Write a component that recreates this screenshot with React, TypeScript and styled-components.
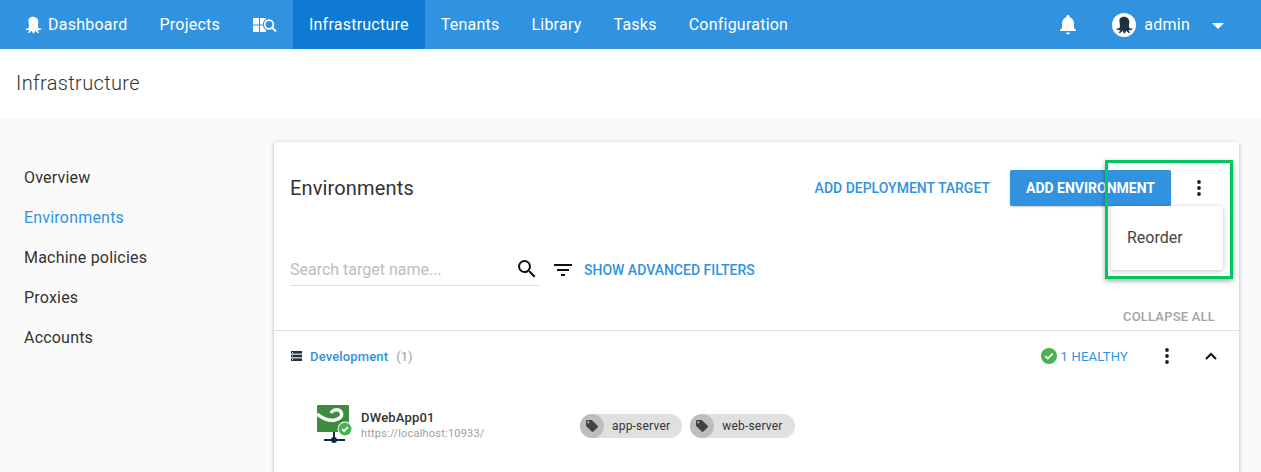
import styled, { createGlobalStyle } from 'styled-components';

const GlobalStyle = createGlobalStyle`
  html, body {
    margin: 0;
    padding: 0;
    background: #fafafa;
    font-family: Roboto, "Liberation Sans", sans-serif;
    overflow: hidden;
  }
`;

const Page = styled.div`
  width: 1261px;
  height: 472px;
  overflow: hidden;
  position: relative;
`;

const NavBar = styled.nav`
  display: flex;
  align-items: stretch;
  height: 49px;
  padding-left: 8px;
  background: #3192e0;
  color: #fff;
`;

const NavItem = styled.div<{ $active?: boolean }>`
  display: flex;
  align-items: center;
  gap: 6px;
  padding: 0 16px;
  font-size: 16px;
  letter-spacing: 0.23px;
  line-height: 48px;
  background: ${(p) => (p.$active ? '#0e7ad4' : 'transparent')};
`;

const NavRight = styled.div`
  display: flex;
  align-items: center;
  margin-left: auto;
`;

const Bell = styled.div`
  display: flex;
  margin-right: 35px;
`;

const Avatar = styled.div`
  display: flex;
  align-items: center;
  justify-content: center;
  width: 24px;
  height: 24px;
  border-radius: 50%;
  background: #fff;
  margin-right: 8px;
`;

const UserName = styled.span`
  font-size: 16px;
  letter-spacing: 0.23px;
  margin-right: 22px;
`;

const Caret = styled.div`
  width: 0;
  height: 0;
  border-left: 6px solid transparent;
  border-right: 6px solid transparent;
  border-top: 6px solid #fff;
  margin: 3px 37px 0 0;
`;

const TitleBar = styled.header`
  display: flex;
  align-items: center;
  height: 69px;
  padding: 0 0 2px 16px;
  box-sizing: border-box;
  background: #fff;
  color: #333;
  font-size: 20px;
  font-weight: 300;
  letter-spacing: 0.35px;
`;

const Body = styled.div`
  display: flex;
  padding: 24px 22px 0 0;
  align-items: flex-start;
`;

const Sidebar = styled.aside`
  display: flex;
  flex-direction: column;
  width: 274px;
  flex-shrink: 0;
  padding: 16px 0 0 24px;
  box-sizing: border-box;
`;

const SideLink = styled.div<{ $active?: boolean }>`
  height: 40px;
  line-height: 40px;
  font-size: 16px;
  letter-spacing: 0.2px;
  color: ${(p) => (p.$active ? '#3192e0' : '#333')};
`;

const Card = styled.main`
  flex: 1;
  height: 360px;
  background: #fff;
  box-shadow: 0 1px 4px rgba(0, 0, 0, 0.28);
`;

const CardHeader = styled.div`
  display: flex;
  align-items: center;
  height: 92px;
  padding: 0 16px;
`;

const CardTitle = styled.h2`
  margin: 0 auto 0 0;
  font-size: 20px;
  font-weight: 400;
  letter-spacing: 0.15px;
  color: #333;
`;

const TextButton = styled.span`
  font-size: 14px;
  font-weight: 500;
  color: #3192e0;
  text-transform: uppercase;
`;

const MutedButton = styled.span`
  padding-top: 2px;
  font-size: 13px;
  font-weight: 500;
  letter-spacing: 0.2px;
  color: #a3a3a3;
  text-transform: uppercase;
`;

const PrimaryButton = styled.div`
  display: flex;
  align-items: center;
  justify-content: center;
  width: 161px;
  height: 36px;
  margin-left: 20px;
  border-radius: 2px;
  background: #3192e0;
  color: #fff;
  font-size: 14px;
  font-weight: 700;
  text-transform: uppercase;
  box-shadow: 0 1px 2px rgba(0, 0, 0, 0.2);
`;

const DotsButton = styled.div<{ $left: number; $right: number }>`
  display: flex;
  justify-content: center;
  width: 24px;
  margin: 0 ${(p) => p.$right}px 0 ${(p) => p.$left}px;
`;

const FilterRow = styled.div`
  display: flex;
  align-items: center;
  height: 60px;
  padding: 0 16px;
  margin-top: 6px;
`;

const SearchBox = styled.div`
  display: flex;
  align-items: center;
  justify-content: space-between;
  width: 249px;
  height: 36px;
  box-sizing: border-box;
  padding-top: 4px;
  margin-bottom: 4px;
  border-bottom: 1px solid #e0e0e0;
`;

const Placeholder = styled.span`
  font-size: 16px;
  color: #bdbdbd;
`;

const SearchGlyph = styled.svg`
  margin-top: -2px;
`;

const FilterToggle = styled.div`
  display: flex;
  align-items: center;
  gap: 12px;
  margin-left: 15px;
`;

const CollapseRow = styled.div`
  display: flex;
  justify-content: flex-end;
  align-items: center;
  height: 29px;
  padding-right: 24px;
  margin-top: 1px;
  border-bottom: 1px solid #e0e0e0;
`;

const GroupRow = styled.div`
  display: flex;
  align-items: center;
  height: 50px;
  padding: 0 16px;
`;

const GroupName = styled.span`
  margin-left: 8px;
  font-size: 13px;
  font-weight: 500;
  letter-spacing: 0.15px;
  color: #3192e0;
`;

const GroupCount = styled.span`
  margin: 0 auto 0 8px;
  font-size: 13px;
  color: #9e9e9e;
`;

const HealthLabel = styled.span`
  margin-left: 4px;
  font-size: 13px;
  letter-spacing: 0.2px;
  color: #3192e0;
`;

const Chevron = styled.svg`
  margin-left: 20px;
`;

const TargetRow = styled.div`
  display: flex;
  align-items: center;
  height: 52px;
  padding-left: 43px;
  margin-top: 19px;
`;

const MachineGlyph = styled.svg`
  margin-bottom: 4px;
`;

const TargetText = styled.div`
  display: flex;
  flex-direction: column;
  gap: 1px;
  width: 219px;
  margin: 0 0 3px 8px;
`;

const TargetName = styled.span`
  font-size: 13px;
  font-weight: 500;
  letter-spacing: 0.2px;
  line-height: 16px;
  color: #333;
`;

const TargetUrl = styled.span`
  font-size: 11px;
  letter-spacing: 0.2px;
  line-height: 13px;
  color: #9e9e9e;
`;

const Tag = styled.div`
  display: flex;
  align-items: center;
  height: 24px;
  margin-right: 8px;
  padding-right: 12px;
  border-radius: 12px;
  background: #e0e0e0;
  color: #333;
  font-size: 12px;
  letter-spacing: 0.2px;
`;

const TagIcon = styled.div`
  display: flex;
  align-items: center;
  justify-content: center;
  width: 24px;
  height: 24px;
  margin-right: 8px;
  border-radius: 50%;
  background: #bdbdbd;
`;

const Menu = styled.div`
  position: absolute;
  left: 1111px;
  top: 206px;
  display: flex;
  align-items: center;
  width: 112px;
  height: 64px;
  padding: 0 0 2px 16px;
  box-sizing: border-box;
  border-radius: 2px;
  background: #fff;
  color: #444;
  font-size: 16px;
  box-shadow: 0 1px 5px rgba(0, 0, 0, 0.25);
`;

const Highlight = styled.div`
  position: absolute;
  left: 1105px;
  top: 160px;
  width: 128px;
  height: 119px;
  box-sizing: border-box;
  border: 3px solid #00c75f;
  box-shadow: 0 2px 5px rgba(0, 0, 0, 0.35);
`;

const Octopus = ({ color, size }: { color: string; size: number }) => (
  <svg width={size} height={size} viewBox="0 0 18 18" fill={color}>
    <path d="M9 .8c3.200 0 5.300 2.400 5.300 5.300 0 2.200-.6 3.300-.2 4.800.3 1.200 1.400 1.800 3 1.500.5 0 .6.5.2.8-1.200 1-2.700 1.200-3.800.6.2 1.100 1 1.900 1.400 2.500.3.4 0 .7-.4.6-1.500-.3-2.800-1.300-3.400-2.500-.2 1.200-.5 2.100-1.200 2.900-.3.3-.6.3-.9 0-.7-.8-1-1.700-1.200-2.900-.6 1.200-1.900 2.200-3.400 2.500-.4.1-.7-.2-.4-.6.4-.6 1.200-1.400 1.400-2.500-1.100.6-2.600.4-3.800-.6-.4-.3-.3-.8.2-.8 1.600.3 2.700-.3 3-1.500.4-1.500-.2-2.600-.2-4.800C3.700 3.200 5.800.8 9 .8z" />
  </svg>
);

const Dots = () => (
  <svg width="4" height="16" viewBox="0 0 4 16" fill="#212121">
    <circle cx="2" cy="2" r="1.900" />
    <circle cx="2" cy="8" r="1.900" />
    <circle cx="2" cy="14" r="1.900" />
  </svg>
);

const TagGlyph = () => (
  <svg width="14" height="14" viewBox="0 0 14 14" fill="#424242">
    <path d="M1 2.200C1 1.500 1.500 1 2.200 1h4.200c.4 0 .7.1.9.4l5.300 5.300c.5.5.5 1.200 0 1.700l-4.200 4.200c-.5.5-1.200.5-1.700 0L1.400 7.300C1.100 7.100 1 6.800 1 6.400V2.200zM3.200 4.400a1.100 1.100 0 1 0 0-2.200 1.100 1.100 0 0 0 0 2.200z" fillRule="evenodd" />
  </svg>
);

const CheckBadge = ({ size }: { size: number }) => (
  <svg width={size} height={size} viewBox="0 0 16 16">
    <circle cx="8" cy="8" r="8" fill="#48b350" />
    <path d="M4.300 8.200l2.500 2.400 4.900-4.900" fill="none" stroke="#fff" strokeWidth="1.800" />
  </svg>
);

const MachineIcon = () => (
  <MachineGlyph width="36" height="38" viewBox="0 0 36 38">
    <rect x="0" y="0" width="32" height="27" rx="1" fill="#3b8c3c" />
    <path d="M0 9c5 4 12 7 18 6 5-1 8-4 6-8-2-3-8-3-10 1" fill="none" stroke="#fff" strokeWidth="3.500" />
    <rect x="16" y="27" width="2" height="8" fill="#14283c" />
    <rect x="7" y="34" width="21" height="2" fill="#14283c" />
    <circle cx="17" cy="35" r="3" fill="#14283c" />
    <circle cx="28" cy="24" r="7.500" fill="#fff" />
    <g transform="translate(21.500 17.500) scale(.81)">
      <circle cx="8" cy="8" r="8" fill="#48b350" />
      <path d="M4.300 8.200l2.500 2.400 4.900-4.900" fill="none" stroke="#fff" strokeWidth="2" />
    </g>
  </MachineGlyph>
);

export default function App() {
  return (
    <Page>
      <GlobalStyle />
      <NavBar>
        <NavItem>
          <Octopus color="#fff" size={18} />
          Dashboard
        </NavItem>
        <NavItem>Projects</NavItem>
        <NavItem>
          <svg width="25" height="16" viewBox="0 0 25 16" fill="#fff">
            <rect x="1" y="1" width="6" height="6.500" rx=".5" />
            <rect x="8" y="1" width="6" height="6.500" rx=".5" />
            <rect x="1" y="8.500" width="6" height="6.500" rx=".5" />
            <rect x="8" y="8.500" width="6" height="6.500" rx=".5" />
            <circle cx="17" cy="7.500" r="6.200" fill="#3192e0" />
            <circle cx="17" cy="7.500" r="4.300" fill="none" stroke="#fff" strokeWidth="1.800" />
            <path d="M20 10.500l4 4" stroke="#fff" strokeWidth="2" />
          </svg>
        </NavItem>
        <NavItem $active>Infrastructure</NavItem>
        <NavItem>Tenants</NavItem>
        <NavItem>Library</NavItem>
        <NavItem>Tasks</NavItem>
        <NavItem>Configuration</NavItem>
        <NavRight>
          <Bell>
            <svg width="18" height="20" viewBox="0 0 18 20" fill="#fff">
              <path d="M9 0c.9 0 1.500.6 1.500 1.500v.7C13.300 3 15 5.300 15 8.500v4.500l2 2v1H1v-1l2-2V8.500C3 5.300 4.700 3 7.500 2.200v-.7C7.500.6 8.100 0 9 0zM7 17.500h4c0 1.100-.9 2-2 2s-2-.9-2-2z" />
            </svg>
          </Bell>
          <Avatar>
            <Octopus color="#1f303f" size={18} />
          </Avatar>
          <UserName>admin</UserName>
          <Caret />
        </NavRight>
      </NavBar>
      <TitleBar>Infrastructure</TitleBar>
      <Body>
        <Sidebar>
          <SideLink>Overview</SideLink>
          <SideLink $active>Environments</SideLink>
          <SideLink>Machine policies</SideLink>
          <SideLink>Proxies</SideLink>
          <SideLink>Accounts</SideLink>
        </Sidebar>
        <Card>
          <CardHeader>
            <CardTitle>Environments</CardTitle>
            <TextButton>Add deployment target</TextButton>
            <PrimaryButton>Add environment</PrimaryButton>
            <DotsButton $left={16} $right={12}>
              <Dots />
            </DotsButton>
          </CardHeader>
          <FilterRow>
            <SearchBox>
              <Placeholder>Search target name...</Placeholder>
              <SearchGlyph width="24" height="24" viewBox="0 0 24 24" fill="#111">
                <path d="M15.500 14h-.79l-.28-.27A6.471 6.471 0 0 0 16 9.500 6.500 6.500 0 1 0 9.500 16c1.610 0 3.090-.59 4.230-1.570l.27.28v.79l5 4.990L20.490 19l-4.990-5zm-6 0C7.010 14 5 11.990 5 9.500S7.010 5 9.500 5 14 7.010 14 9.500 11.990 14 9.500 14z" />
              </SearchGlyph>
            </SearchBox>
            <FilterToggle>
              <svg width="18" height="12" viewBox="0 0 18 12" fill="#111">
                <rect x="0" y="0" width="18" height="2" />
                <rect x="3" y="5" width="12" height="2" />
                <rect x="7" y="10" width="4" height="2" />
              </svg>
              <TextButton>Show advanced filters</TextButton>
            </FilterToggle>
          </FilterRow>
          <CollapseRow>
            <MutedButton>Collapse all</MutedButton>
          </CollapseRow>
          <GroupRow>
            <svg width="12" height="10" viewBox="0 0 12 10" fill="#1f303f">
              <rect x="1" y="0" width="11" height="2.600" />
              <rect x="1" y="3.700" width="11" height="2.600" />
              <rect x="1" y="7.400" width="11" height="2.600" />
              <rect x="2" y="1" width="1" height="1" fill="#fff" />
              <rect x="2" y="4.500" width="1" height="1" fill="#fff" />
              <rect x="2" y="8.200" width="1" height="1" fill="#fff" />
            </svg>
            <GroupName>Development</GroupName>
            <GroupCount>(1)</GroupCount>
            <CheckBadge size={16} />
            <HealthLabel>1 HEALTHY</HealthLabel>
            <DotsButton $left={27} $right={0}>
              <Dots />
            </DotsButton>
            <Chevron width="24" height="24" viewBox="0 0 24 24">
              <path d="M7 15l5-5 5 5" fill="none" stroke="#111" strokeWidth="2" />
            </Chevron>
          </GroupRow>
          <TargetRow>
            <MachineIcon />
            <TargetText>
              <TargetName>DWebApp01</TargetName>
              <TargetUrl>https://localhost:10933/</TargetUrl>
            </TargetText>
            <Tag>
              <TagIcon>
                <TagGlyph />
              </TagIcon>
              app-server
            </Tag>
            <Tag>
              <TagIcon>
                <TagGlyph />
              </TagIcon>
              web-server
            </Tag>
          </TargetRow>
        </Card>
      </Body>
      <Menu>Reorder</Menu>
      <Highlight />
    </Page>
  );
}
